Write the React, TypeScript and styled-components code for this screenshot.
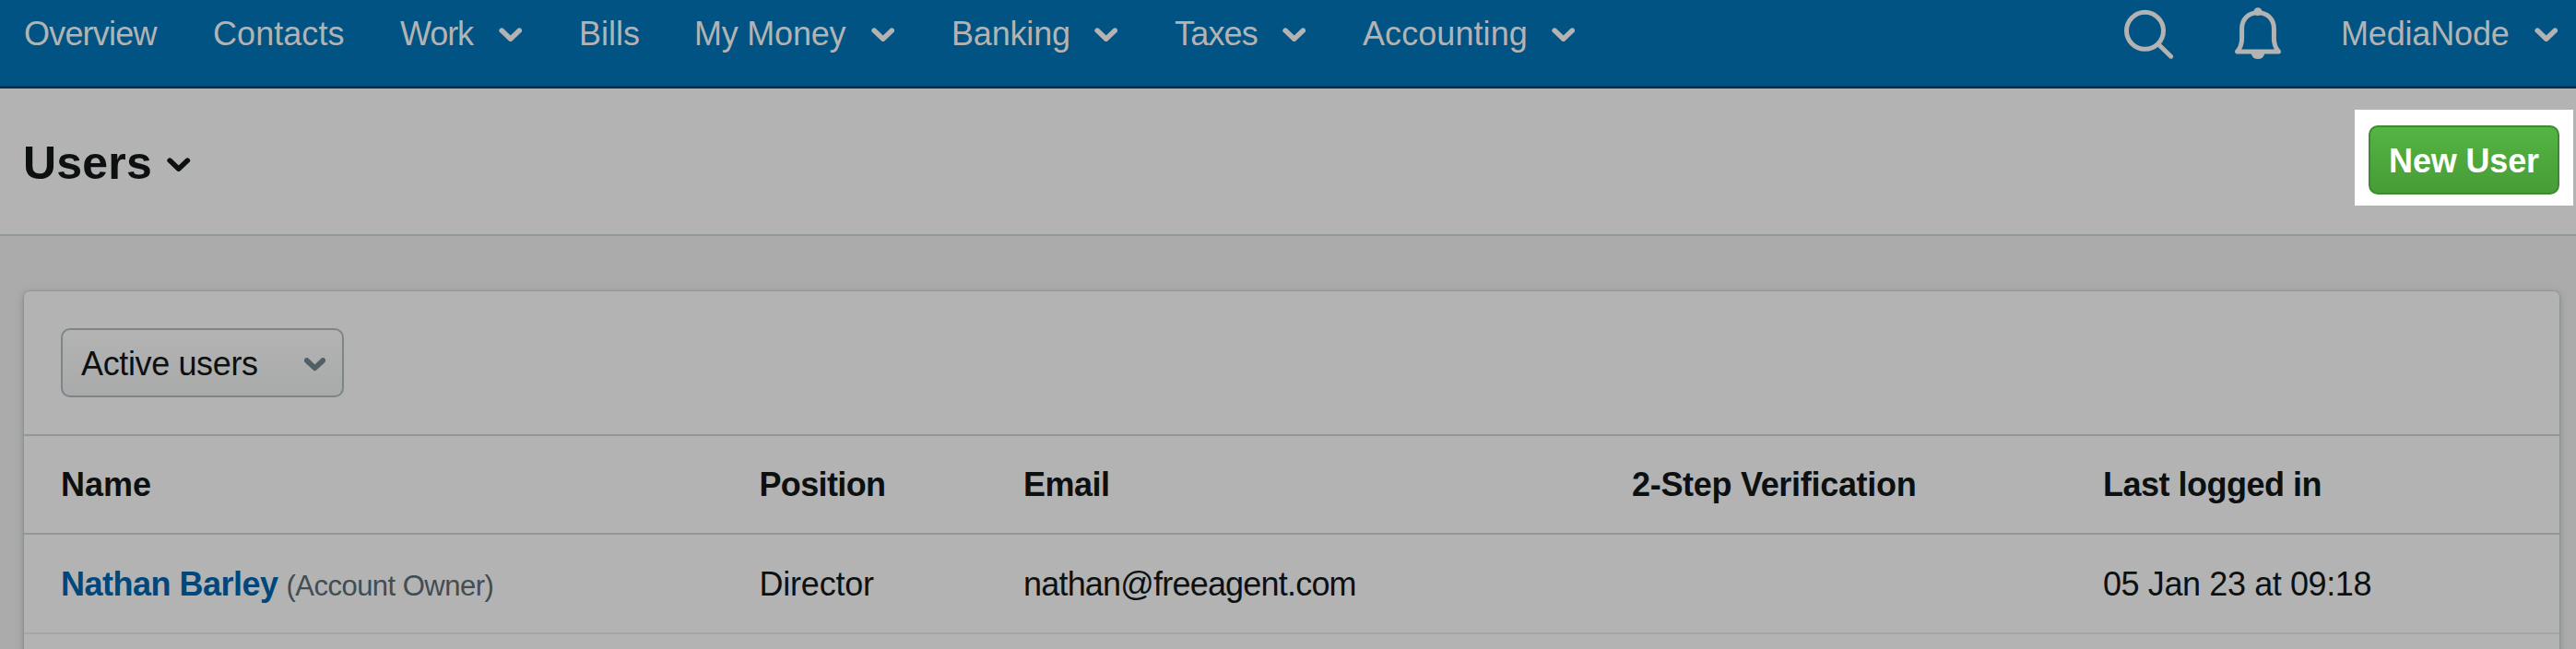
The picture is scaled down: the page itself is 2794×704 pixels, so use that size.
import React from 'react';
import styled, { createGlobalStyle } from 'styled-components';

const GlobalStyle = createGlobalStyle`
  *, *::before, *::after { box-sizing: border-box; }
  body {
    margin: 0;
    height: 704px;
    overflow: hidden;
    background: #ababab;
    color: #0c1011;
    font-family: "Liberation Sans", Arial, sans-serif;
    font-size: 36px;
  }
`;

const Page = styled.div`
  height: 704px;
  overflow: hidden;
`;

const NavBar = styled.nav`
  display: flex;
  justify-content: space-between;
  height: 96px;
  padding: 0 20px 21px 26px;
  background: #005383;
  border-bottom: 2px solid #002d52;
  box-shadow: inset 0 -1px 0 #00426f;
  color: #b3b3b3;
`;

const NavGroup = styled.div`
  display: flex;
  align-items: center;
  height: 73px;
`;

const NavItem = styled.a<{ $menu?: boolean }>`
  display: flex;
  align-items: center;
  gap: 26.5px;
  margin-right: ${(p) => (p.$menu ? 62 : 60)}px;
`;

const Text = styled.span<{ $tracking?: number; $width?: number }>`
  display: block;
  width: ${(p) => (p.$width ? `${p.$width}px` : 'auto')};
  line-height: 73px;
  letter-spacing: ${(p) => p.$tracking ?? 0}px;
  white-space: nowrap;
`;

const Tools = styled(NavGroup)`
  gap: 62px;
`;

const Account = styled.a`
  display: flex;
  align-items: center;
  gap: 26.5px;
`;

const ChevronSvg = styled.svg<{ $small?: boolean }>`
  display: block;
  flex: none;
  width: ${(p) => (p.$small ? 23 : 25.5)}px;
  height: ${(p) => (p.$small ? 14.5 : 15.5)}px;
  margin-top: 3px;
  fill: none;
  stroke: currentColor;
  stroke-width: ${(p) => (p.$small ? 6.4 : 5.5)};
  stroke-linecap: round;
  stroke-linejoin: round;
`;

const Glyph = styled.svg`
  display: block;
  width: 56px;
  height: 57px;
  fill: none;
  stroke: currentColor;
  stroke-width: 5;
  stroke-linecap: round;
  stroke-linejoin: round;
`;

const PageHeader = styled.header`
  display: flex;
  justify-content: space-between;
  align-items: flex-start;
  height: 160px;
  padding: 23px 3px 0 25px;
  background: #b3b3b3;
  border-bottom: 2px solid #91989c;
`;

const TitleMenu = styled.div`
  display: flex;
  align-items: center;
  gap: 16px;
  height: 116px;
`;

const Title = styled.h1`
  margin: 0;
  font-size: 50px;
  line-height: 60px;
  letter-spacing: 0.2px;
`;

const Spotlight = styled.div`
  width: 237px;
  height: 104px;
  padding: 17px 15px 12px;
  background: #fff;
`;

const PrimaryButton = styled.button`
  display: block;
  width: 207px;
  height: 75px;
  padding: 2px 0 0;
  border: 2px solid #3c8a31;
  border-radius: 10px;
  background: linear-gradient(#54b442, #479c37);
  color: #fff;
  font: 700 36px/69px "Liberation Sans", Arial, sans-serif;
  letter-spacing: -0.15px;
`;

const Card = styled.section`
  height: 420px;
  margin: 60px 18px 0 26px;
  border-radius: 6px;
  background: #b3b3b3;
  box-shadow: 0 0 2px rgba(70, 84, 92, 0.4), 0 2px 8px rgba(70, 84, 92, 0.4);
`;

const Filters = styled.div`
  height: 157px;
  padding: 40px;
  border-bottom: 2px solid #91989c;
`;

const Select = styled.div`
  display: flex;
  align-items: center;
  justify-content: space-between;
  width: 307px;
  height: 75px;
  padding: 1px 18px 0 20px;
  border: 2px solid #7d8589;
  border-radius: 10px;
  background: linear-gradient(#b3b3b3, #a9aaaa);
`;

const SelectArrow = styled.span`
  color: #515f66;
`;

const Row = styled.div<{ $head?: boolean }>`
  display: grid;
  grid-template-columns: 757.5px 286.5px 660px 511px 1fr;
  align-items: center;
  height: ${(p) => (p.$head ? 107 : 108)}px;
  padding-left: 40px;
  border-bottom: 2px solid ${(p) => (p.$head ? '#91989c' : '#a3a5a6')};
  font-weight: ${(p) => (p.$head ? 700 : 400)};
`;

const NameCell = styled.div`
  display: flex;
  align-items: baseline;
`;

const UserLink = styled.a`
  width: 244.5px;
  color: #00477c;
  font-weight: 700;
  line-height: 73px;
  letter-spacing: -0.51px;
  white-space: nowrap;
`;

const Role = styled.span`
  color: #414d53;
  font-size: 31px;
  letter-spacing: -0.52px;
  white-space: nowrap;
`;

function Chevron({ small }: { small?: boolean }) {
  return (
    <ChevronSvg $small={small} viewBox="0 0 25.5 15.5">
      <path d="M3.1 3.1 12.75 12.2 22.4 3.1" />
    </ChevronSvg>
  );
}

const navItems = [
  { label: 'Overview', width: 145, tracking: -0.8 },
  { label: 'Contacts', width: 143, tracking: 0.06 },
  { label: 'Work', width: 80, tracking: -1.1, menu: true },
  { label: 'Bills', width: 65, tracking: 0 },
  { label: 'My Money', width: 165, tracking: -0.22, menu: true },
  { label: 'Banking', width: 128, tracking: -0.18, menu: true },
  { label: 'Taxes', width: 90, tracking: -0.8, menu: true },
  { label: 'Accounting', width: 178, tracking: 0.07, menu: true },
];

export default function App() {
  return (
    <Page>
      <GlobalStyle />
      <NavBar>
        <NavGroup>
          {navItems.map((item) => (
            <NavItem key={item.label} $menu={item.menu}>
              <Text $width={item.width} $tracking={item.tracking}>{item.label}</Text>
              {item.menu && <Chevron />}
            </NavItem>
          ))}
        </NavGroup>
        <Tools>
          <Glyph viewBox="0 0 56 57">
            <circle cx="23.5" cy="25.3" r="20" />
            <path d="M38 40 51.7 53.2" />
          </Glyph>
          <Glyph viewBox="0 0 56 57">
            <path d="M28 5.7C17.8 5.7 10.6 12.8 10.6 23V34C10.6 40 9 44 5.5 48H50.5C47 44 45.4 40 45.4 34V23C45.4 12.8 38.2 5.7 28 5.7Z" />
            <circle cx="28" cy="4.6" r="4.4" fill="currentColor" stroke="none" />
            <path d="M20.8 49.5a7.2 6.6 0 0 0 14.4 0z" fill="currentColor" stroke="none" />
          </Glyph>
          <Account>
            <Text $width={183} $tracking={-0.17}>MediaNode</Text>
            <Chevron />
          </Account>
        </Tools>
      </NavBar>

      <PageHeader>
        <TitleMenu>
          <Title>Users</Title>
          <Chevron />
        </TitleMenu>
        <Spotlight>
          <PrimaryButton>New User</PrimaryButton>
        </Spotlight>
      </PageHeader>

      <Card>
        <Filters>
          <Select>
            <Text $tracking={-0.37}>Active users</Text>
            <SelectArrow>
              <Chevron small />
            </SelectArrow>
          </Select>
        </Filters>
        <Row $head>
          <Text $tracking={0}>Name</Text>
          <Text $tracking={-0.64}>Position</Text>
          <Text $tracking={-0.51}>Email</Text>
          <Text $tracking={-0.3}>2-Step Verification</Text>
          <Text $tracking={-0.5}>Last logged in</Text>
        </Row>
        <Row>
          <NameCell>
            <UserLink>Nathan Barley</UserLink>
            <Role>(Account Owner)</Role>
          </NameCell>
          <Text $tracking={-0.22}>Director</Text>
          <Text $tracking={-0.8}>nathan@freeagent.com</Text>
          <span />
          <Text $tracking={-0.4}>05 Jan 23 at 09:18</Text>
        </Row>
      </Card>
    </Page>
  );
}
